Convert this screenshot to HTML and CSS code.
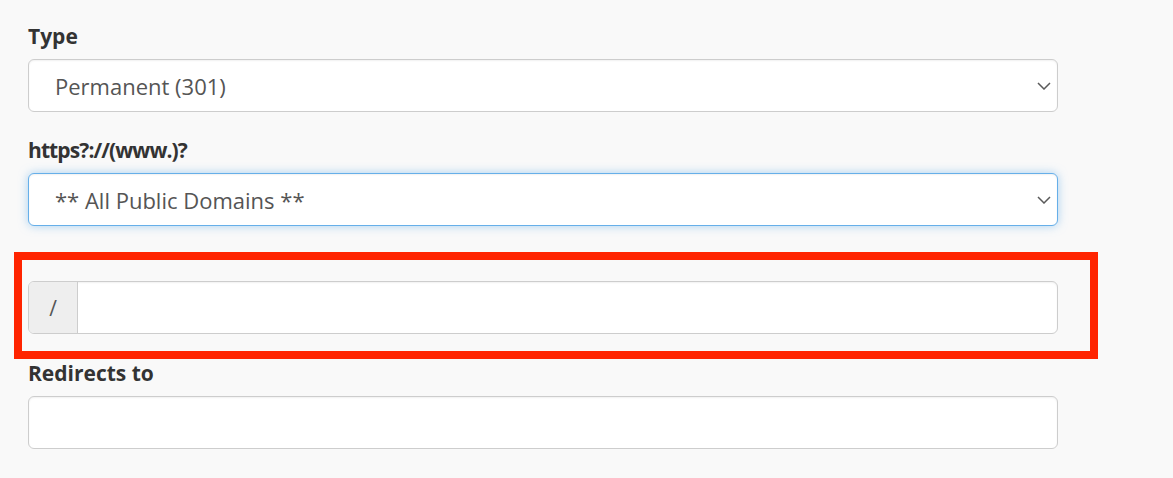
FILE: index.html
```html
<!DOCTYPE html>
<html>
<head>
<meta charset="utf-8">
<link rel="stylesheet" href="styles.css">
</head>
<body>
<div class="form">
  <div class="group">
    <label class="label">Type</label>
    <div class="select">
      <span>Permanent (301)</span>
      <svg class="chev" width="14" height="8" viewBox="0 0 14 8"><path d="M1 1 L7 7 L13 1" fill="none" stroke="#5a5a5a" stroke-width="1.5"/></svg>
    </div>
  </div>
  <div class="group">
    <label class="label tight">https?://(www.)?</label>
    <div class="select focus">
      <span>** All Public Domains **</span>
      <svg class="chev" width="14" height="8" viewBox="0 0 14 8"><path d="M1 1 L7 7 L13 1" fill="none" stroke="#5a5a5a" stroke-width="1.5"/></svg>
    </div>
  </div>
  <div class="highlight">
    <div class="input-group">
      <span class="addon">/</span>
      <div class="field"></div>
    </div>
  </div>
  <div class="group">
    <label class="label">Redirects to</label>
    <div class="input"></div>
  </div>
</div>
</body>
</html>
```

FILE: styles.css
```css
html, body {
  margin: 0;
  padding: 0;
  background: #f9f9f9;
  font-family: "Open Sans", "Liberation Sans", sans-serif;
}
.form {
  width: 1030px;
  padding: 22px 0 0 28px;
}
.group {
  display: flex;
  flex-direction: column;
}
.group + .group {
  margin-top: 24px;
}
.label {
  display: block;
  font-size: 21px;
  line-height: 29px;
  font-weight: 700;
  color: #333;
  margin-bottom: 8px;
}
.label.tight {
  letter-spacing: -0.9px;
}
.select, .input, .input-group {
  box-sizing: border-box;
  height: 53px;
  border: 1px solid #cdcdcd;
  border-radius: 6px;
  background: #fff;
  box-shadow: inset 0 1px 2px rgba(0,0,0,0.06);
}
.select {
  display: flex;
  align-items: center;
  justify-content: space-between;
  padding: 0 6px 0 26px;
  font-size: 22px;
  color: #555;
}
.select.focus {
  border-color: #66afe9;
  box-shadow: inset 0 1px 2px rgba(0,0,0,0.06), 0 0 10px rgba(102,175,233,0.55);
}
.chev {
  display: block;
}
.highlight {
  box-sizing: border-box;
  margin: 26px 0 0 -14px;
  width: 1084px;
  border: 8px solid #ff2400;
  padding: 21px 32px 17px 6px;
}
.input-group {
  display: flex;
  overflow: hidden;
}
.addon {
  width: 48px;
  flex: none;
  background: #eeeeee;
  border-right: 1px solid #cdcdcd;
  display: flex;
  align-items: center;
  justify-content: center;
  font-size: 21px;
  color: #555;
}
.field {
  flex: 1;
}
.highlight + .group {
  margin-top: 0;
}
```
